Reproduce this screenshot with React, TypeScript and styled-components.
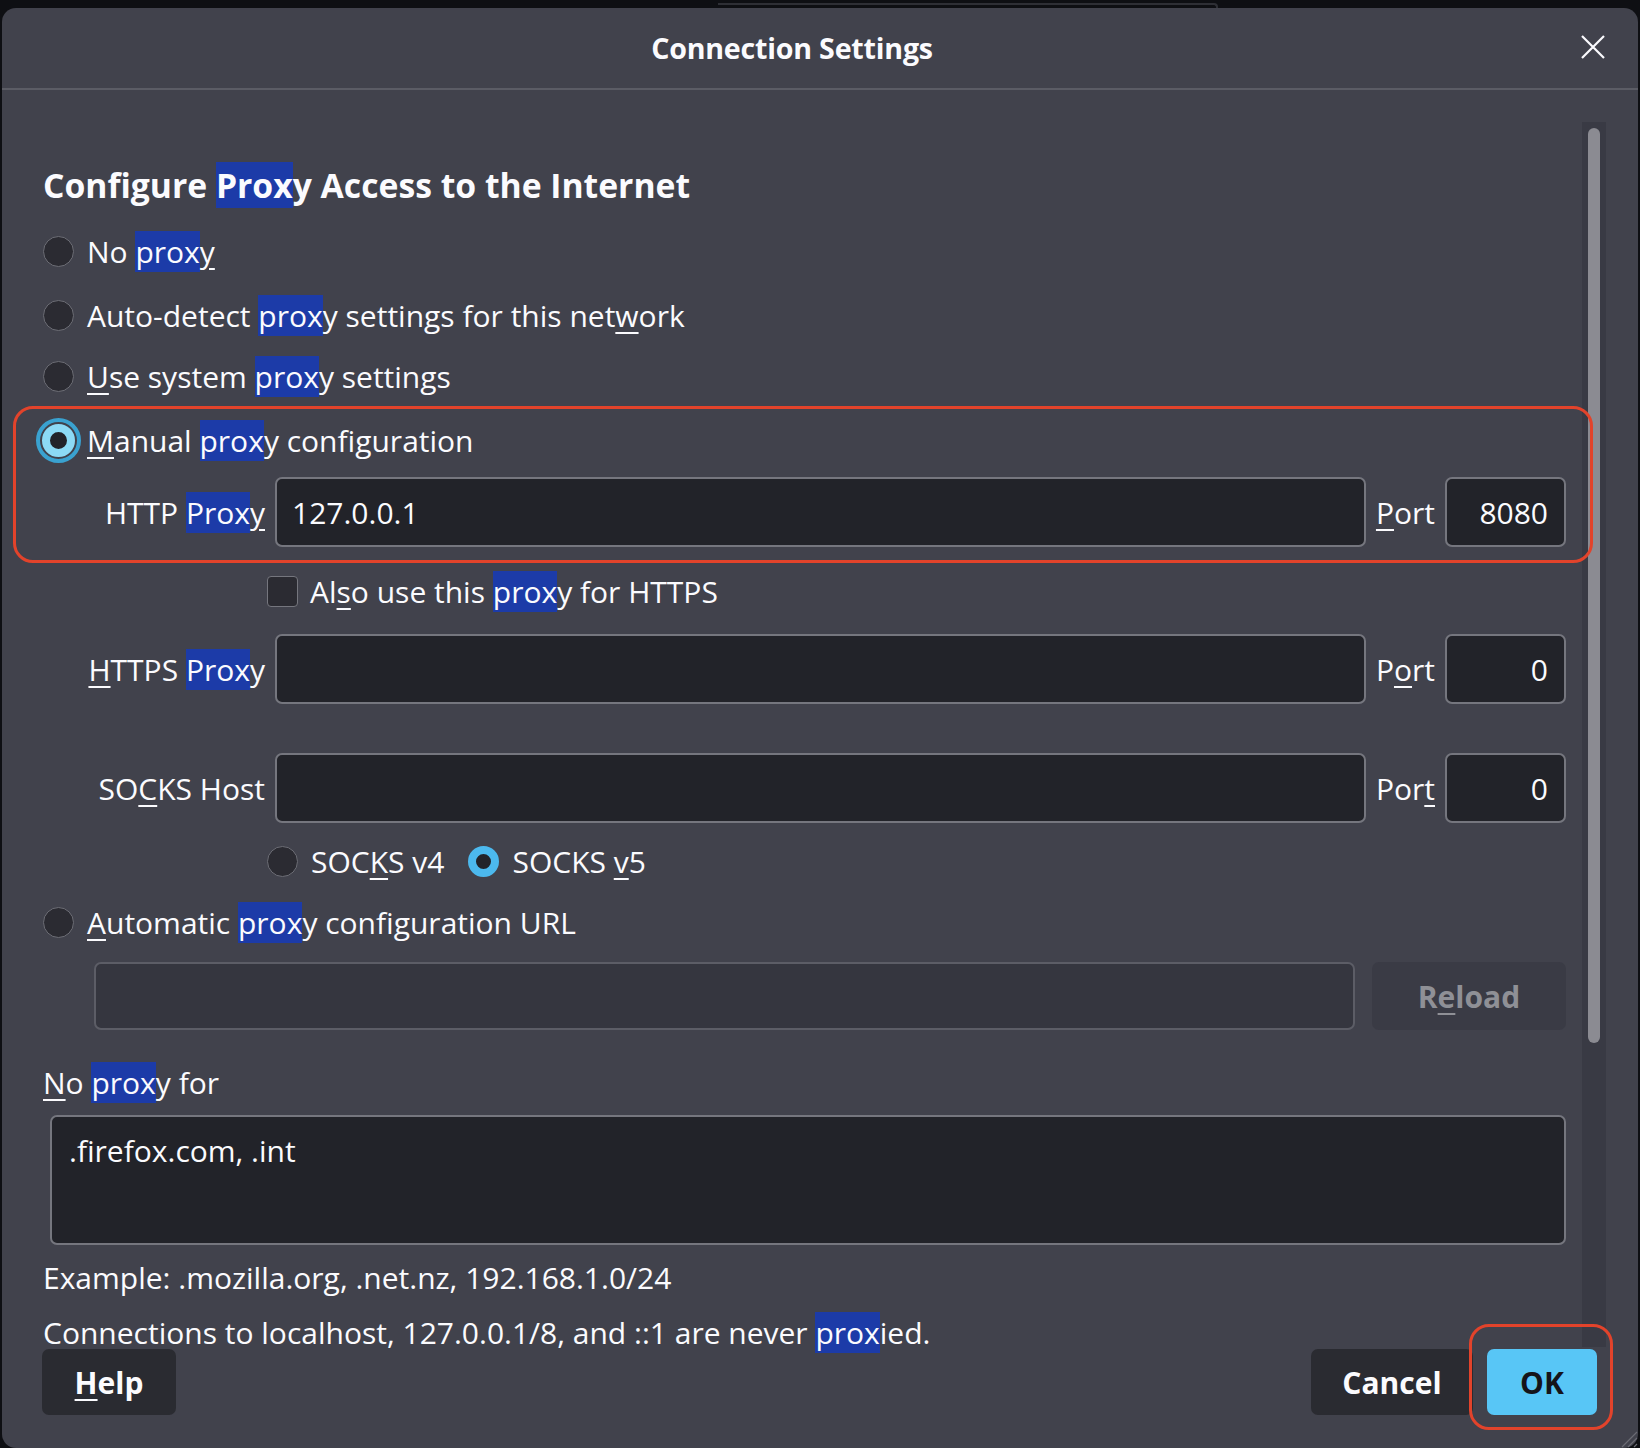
import React from "react";
import styled, { createGlobalStyle, css } from "styled-components";

const GlobalStyle = createGlobalStyle`
  html, body {
    margin: 0;
    padding: 0;
    background: #0e0f13;
  }
  * {
    box-sizing: border-box;
  }
`;

const textColor = "#fbfbfe";
const dialogBg = "#41424c";
const fieldBg = "#222329";
const fieldBorder = "#75767e";
const accent = "#4cb9ee";

const Page = styled.div`
  position: relative;
  width: 1640px;
  height: 1448px;
  overflow: hidden;
  display: flex;
  flex-direction: column;
  background: #0e0f13;
  font-family: "Open Sans", "Noto Sans", sans-serif;
  font-size: 30px;
  color: ${textColor};
`;

const TopStrip = styled.div`
  height: 8px;
  flex: none;
  padding-left: 718px;
  padding-top: 3px;
`;

const BehindEdge = styled.div`
  width: 500px;
  height: 5px;
  border-top: 2px solid #2e2f35;
  border-right: 2px solid #2e2f35;
  border-top-right-radius: 4px;
`;

const Dialog = styled.div`
  position: relative;
  flex: 1;
  margin-left: 2px;
  width: 1636px;
  background: ${dialogBg};
  border-radius: 14px;
  display: flex;
  flex-direction: column;
`;

const Header = styled.div`
  height: 82px;
  flex: none;
  display: flex;
  align-items: center;
  padding: 0 32px 2px 2px;
  border-bottom: 2px solid #5b5c65;
`;

const Title = styled.div`
  flex: 1;
  text-align: center;
  font-weight: 700;
  font-size: 28.6px;
  letter-spacing: -0.2px;
`;

const CloseButton = styled.div`
  width: 26px;
  height: 26px;
  display: flex;
`;

const Body = styled.div`
  height: 1258px;
  flex: none;
  display: flex;
  padding-left: 41px;
  padding-right: 32px;
`;

const Content = styled.div`
  flex: 1;
  display: flex;
  flex-direction: column;
  padding-top: 73px;
  margin-right: 16px;
`;

const Track = styled.div`
  width: 24px;
  height: 1225px;
  margin-top: 32px;
  background: #393a44;
  padding-top: 6px;
  display: flex;
  justify-content: center;
`;

const Thumb = styled.div`
  width: 12px;
  height: 915px;
  border-radius: 6px;
  background: #8b8b92;
`;

const Heading = styled.div`
  height: 44px;
  line-height: 44px;
  font-size: 33.7px;
  font-weight: 700;
  white-space: nowrap;
`;

const Hl = styled.span`
  background: #1c3ba8;
`;

const Ak = styled.span`
  text-decoration: underline;
  text-decoration-thickness: 2px;
  text-underline-offset: 5px;
`;

const Row = styled.div<{ $mt: number; $indent?: number; $h?: number }>`
  display: flex;
  align-items: center;
  height: ${(p) => p.$h ?? 40}px;
  margin-top: ${(p) => p.$mt}px;
  padding-left: ${(p) => p.$indent ?? 0}px;
  white-space: nowrap;
  flex: none;
`;

const Radio = styled.span<{ $checked?: boolean; $focused?: boolean }>`
  flex: none;
  width: 31px;
  height: 31px;
  border-radius: 50%;
  background: #2b2b32;
  border: 1.5px solid #6c6d75;
  margin-right: 13px;
  ${(p) =>
    p.$checked &&
    css`
      background: ${fieldBg};
      border: 8px solid ${accent};
    `}
  ${(p) =>
    p.$focused &&
    css`
      width: 33px;
      height: 33px;
      margin-left: -1px;
      margin-right: 12px;
      border-color: #8cdaf5;
      outline: 4px solid #3aa2d0;
      outline-offset: 2px;
    `}
`;

const Checkbox = styled.span`
  flex: none;
  width: 31px;
  height: 31px;
  border-radius: 4px;
  background: #2b2b32;
  border: 1.5px solid #75767e;
  margin-right: 12px;
`;

const FieldLabel = styled.span`
  width: 222px;
  flex: none;
  text-align: right;
  margin-right: 10px;
`;

const TextInput = styled.input<{ $port?: boolean }>`
  height: 100%;
  min-width: 0;
  flex: ${(p) => (p.$port ? "none" : "1")};
  width: ${(p) => (p.$port ? "121px" : "auto")};
  background: ${fieldBg};
  border: 2px solid ${fieldBorder};
  border-radius: 7px;
  color: ${textColor};
  font: inherit;
  padding: 0 ${(p) => (p.$port ? "16px" : "15px")};
  text-align: ${(p) => (p.$port ? "right" : "left")};
  outline: none;
`;

const PortLabel = styled.span`
  margin: 0 10px;
`;

const GroupGap = styled.span`
  width: 24px;
  flex: none;
`;

const UrlInput = styled.div`
  flex: 1;
  height: 100%;
  background: #35363f;
  border: 2px solid #5c5d66;
  border-radius: 7px;
`;

const ReloadButton = styled.div`
  width: 194px;
  height: 100%;
  margin-left: 17px;
  background: #3a3b45;
  border-radius: 7px;
  display: flex;
  align-items: center;
  justify-content: center;
  font-weight: 700;
  color: #8f9096;
`;

const NoProxyArea = styled.textarea`
  flex: none;
  margin-top: 13px;
  margin-left: 7px;
  height: 130px;
  background: ${fieldBg};
  border: 2px solid ${fieldBorder};
  border-radius: 7px;
  color: ${textColor};
  font: inherit;
  line-height: 40px;
  padding: 14px 17px;
  resize: none;
  outline: none;
`;

const Footer = styled.div`
  flex: 1;
  display: flex;
  align-items: flex-start;
  padding: 1px 41px 0 40px;
  gap: 14px;
`;

const Button = styled.div<{ $primary?: boolean; $w: number }>`
  width: ${(p) => p.$w}px;
  height: 66px;
  border-radius: 7px;
  display: flex;
  align-items: center;
  justify-content: center;
  font-weight: 700;
  background: ${(p) => (p.$primary ? "#58c6f6" : "#2a2b31")};
  color: ${(p) => (p.$primary ? "#15141a" : textColor)};
`;

const Spacer = styled.div`
  flex: 1;
`;

const Annotation = styled.div<{ $x: number; $y: number; $w: number; $h: number }>`
  position: absolute;
  left: ${(p) => p.$x}px;
  top: ${(p) => p.$y}px;
  width: ${(p) => p.$w}px;
  height: ${(p) => p.$h}px;
  border: 3px solid #e2432b;
  border-radius: 20px;
  pointer-events: none;
`;

const Grip = styled.svg`
  position: absolute;
  right: 0;
  bottom: 0;
`;

const CloseIcon = () => (
  <svg width="26" height="26" viewBox="0 0 26 26">
    <path d="M2 2 L24 24 M24 2 L2 24" stroke="#fbfbfe" strokeWidth="2.2" fill="none" />
  </svg>
);

const App = () => {
  return (
    <>
      <GlobalStyle />
      <Page>
        <TopStrip>
          <BehindEdge />
        </TopStrip>
        <Dialog>
          <Header>
            <Title>Connection Settings</Title>
            <CloseButton>
              <CloseIcon />
            </CloseButton>
          </Header>
          <Body>
            <Content>
              <Heading>
                Configure <Hl>Prox</Hl>y Access to the Internet
              </Heading>
              <Row $mt={24}>
                <Radio />
                <span>
                  No <Hl>prox</Hl>
                  <Ak>y</Ak>
                </span>
              </Row>
              <Row $mt={24}>
                <Radio />
                <span>
                  Auto-detect <Hl>prox</Hl>y settings for this net<Ak>w</Ak>ork
                </span>
              </Row>
              <Row $mt={21}>
                <Radio />
                <span>
                  <Ak>U</Ak>se system <Hl>prox</Hl>y settings
                </span>
              </Row>
              <Row $mt={24}>
                <Radio $checked $focused />
                <span>
                  <Ak>M</Ak>anual <Hl>prox</Hl>y configuration
                </span>
              </Row>
              <Row $mt={17} $h={70}>
                <FieldLabel>
                  HTTP <Hl>Prox</Hl>
                  <Ak>y</Ak>
                </FieldLabel>
                <TextInput readOnly value="127.0.0.1" />
                <PortLabel>
                  <Ak>P</Ak>ort
                </PortLabel>
                <TextInput $port readOnly value="8080" />
              </Row>
              <Row $mt={24} $indent={224}>
                <Checkbox />
                <span>
                  Al<Ak>s</Ak>o use this <Hl>prox</Hl>y for HTTPS
                </span>
              </Row>
              <Row $mt={23} $h={70}>
                <FieldLabel>
                  <Ak>H</Ak>TTPS <Hl>Prox</Hl>y
                </FieldLabel>
                <TextInput readOnly value="" />
                <PortLabel>
                  P<Ak>o</Ak>rt
                </PortLabel>
                <TextInput $port readOnly value="0" />
              </Row>
              <Row $mt={49} $h={70}>
                <FieldLabel>
                  SO<Ak>C</Ak>KS Host
                </FieldLabel>
                <TextInput readOnly value="" />
                <PortLabel>
                  Por<Ak>t</Ak>
                </PortLabel>
                <TextInput $port readOnly value="0" />
              </Row>
              <Row $mt={18} $indent={224}>
                <Radio />
                <span>
                  SOC<Ak>K</Ak>S v4
                </span>
                <GroupGap />
                <Radio $checked />
                <span>
                  SOCKS <Ak>v</Ak>5
                </span>
              </Row>
              <Row $mt={21}>
                <Radio />
                <span>
                  <Ak>A</Ak>utomatic <Hl>prox</Hl>y configuration URL
                </span>
              </Row>
              <Row $mt={20} $h={68} $indent={51}>
                <UrlInput />
                <ReloadButton>
                  <span>
                    R<Ak>e</Ak>load
                  </span>
                </ReloadButton>
              </Row>
              <Row $mt={32}>
                <span>
                  <Ak>N</Ak>o <Hl>prox</Hl>y for
                </span>
              </Row>
              <NoProxyArea readOnly value=".firefox.com, .int" />
              <Row $mt={12}>
                <span>Example: .mozilla.org, .net.nz, 192.168.1.0/24</span>
              </Row>
              <Row $mt={19} $h={32}>
                <span>
                  Connections to localhost, 127.0.0.1/8, and ::1 are never <Hl>prox</Hl>ied.
                </span>
              </Row>
            </Content>
            <Track>
              <Thumb />
            </Track>
          </Body>
          <Footer>
            <Button $w={134}>
              <span>
                <Ak>H</Ak>elp
              </span>
            </Button>
            <Spacer />
            <Button $w={162}>Cancel</Button>
            <Button $w={110} $primary>
              OK
            </Button>
          </Footer>
          <Grip width="22" height="22" viewBox="0 0 22 22">
            <path d="M21 6 L6 21 M21 12 L12 21 M21 18 L18 21" stroke="#6a6b73" strokeWidth="1.2" />
          </Grip>
        </Dialog>
        <Annotation $x={13} $y={406} $w={1580} $h={157} />
        <Annotation $x={1469} $y={1324} $w={144} $h={106} />
      </Page>
    </>
  );
};

export default App;
